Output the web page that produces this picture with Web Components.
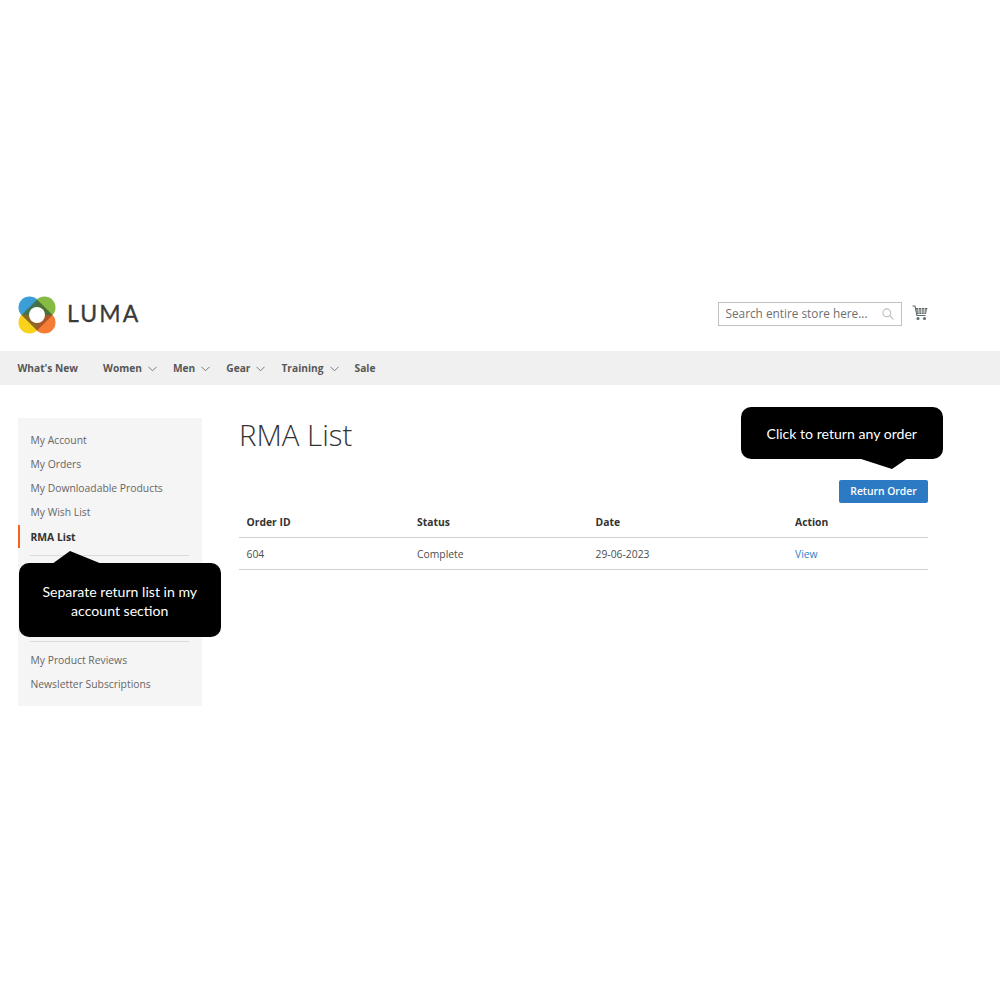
<!DOCTYPE html>
<html>
<head>
<meta charset="utf-8">
<title>RMA List</title>
<style>
  html, body { margin: 0; padding: 0; background: #fff; }
  body { font-family: "Open Sans", sans-serif; color: #333; }
</style>
</head>
<body>
<luma-page>
  <luma-header slot="header"></luma-header>
  <luma-nav slot="nav"></luma-nav>
  <account-sidebar slot="side"></account-sidebar>
  <rma-list slot="main"></rma-list>
  <call-out style="left:18.5px;top:563px;width:202.5px;height:74px">Separate return list in my<br>account section
    <svg slot="tail" style="left:33px;top:-12px" width="50" height="13" viewBox="0 0 50 13"><path d="M0 13 L18 0 L50 13 Z" fill="#000"/></svg>
  </call-out>
  <call-out style="left:740.5px;top:406.5px;width:202.5px;height:52px">Click to return any order
    <svg slot="tail" style="left:117px;top:51px" width="50" height="12" viewBox="0 0 50 12"><path d="M0 0 H50 L34 11 Z" fill="#000"/></svg>
  </call-out>
</luma-page>

<script>
class LumaPage extends HTMLElement {
  constructor() {
    super();
    this.shadowDOM = this.attachShadow({ mode: 'open' });
  }
  connectedCallback() {
    this.shadowDOM.innerHTML = `
      <style>
        :host { display: block; width: 1000px; height: 1000px; padding-top: 296px; box-sizing: border-box; position: relative; }
        .columns { display: flex; padding: 33px 72px 0 18px; gap: 37px; align-items: flex-start; }
        ::slotted([slot=main]) { flex: 1; min-width: 0; }
      </style>
      <slot name="header"></slot>
      <slot name="nav"></slot>
      <div class="columns">
        <slot name="side"></slot>
        <slot name="main"></slot>
      </div>
      <slot></slot>`;
  }
}

class LumaHeader extends HTMLElement {
  constructor() {
    super();
    this.shadowDOM = this.attachShadow({ mode: 'open' });
  }
  connectedCallback() {
    this.shadowDOM.innerHTML = `
      <style>
        :host { display: flex; height: 55px; padding: 0 72px 0 18px; align-items: flex-start; justify-content: space-between; box-sizing: border-box; }
        .logo { display: flex; align-items: center; gap: 11px; height: 37px; }
        .word { font: 400 23px/32px "Lato", sans-serif; letter-spacing: 2.1px; color: #3a3a3a; -webkit-text-stroke: .3px #3a3a3a; margin-top: -4px; }
        .tools { display: flex; align-items: flex-start; gap: 10px; padding-top: 6px; }
        .search { width: 184px; height: 24px; border: 1px solid #c2c2c2; box-sizing: border-box; display: flex; align-items: center; justify-content: space-between; padding: 0 7px 2px 6.5px; font-size: 11.8px; color: #6f6f6f; }
        .search svg { margin-top: 2px; }
        .cart { display: block; margin-top: 3px; }
      </style>
      <div class="logo">
        <svg width="38" height="38" viewBox="0 0 38 38">
          <circle cx="11.5" cy="11.5" r="11" fill="#3b9ed9"/>
          <circle cx="26.5" cy="11.5" r="11" fill="#85bb45"/>
          <circle cx="11.5" cy="26.5" r="11" fill="#f9d21c"/>
          <circle cx="26.5" cy="26.5" r="11" fill="#f47c34"/>
          <path d="M19 19 L3.5 19 L19 3.5 Z" fill="#3f7550"/>
          <path d="M19 19 L19 3.5 L34.5 19 Z" fill="#4c6f35"/>
          <path d="M19 19 L34.5 19 L19 34.5 Z" fill="#a8562a"/>
          <path d="M19 19 L19 34.5 L3.5 19 Z" fill="#8c6a24"/>
          <circle cx="19" cy="19" r="8" fill="#fff"/>
        </svg>
        <span class="word">LUMA</span>
      </div>
      <div class="tools">
        <div class="search">
          <span>Search entire store here...</span>
          <svg width="12" height="12" viewBox="0 0 12 12" fill="none" stroke="#bdbdbd" stroke-width="1.1"><circle cx="4.8" cy="4.8" r="3.9"/><path d="M7.7 7.7 L11.4 11.4"/></svg>
        </div>
        <svg class="cart" width="16" height="16" viewBox="0 0 16 16">
          <path d="M0.5 1 H3 L5 10.5 H13.5" fill="none" stroke="#5e6a6a" stroke-width="1.2"/>
          <path d="M3.4 3 H15.5 L14 9 H4.6 Z" fill="#5e6a6a"/>
          <path d="M4 5 H15 M4.5 7 H14.5 M6.5 3 L7 9 M9.5 3 V9 M12.5 3 L12 9" stroke="#fff" stroke-width=".6" fill="none"/>
          <circle cx="6" cy="13.5" r="1.5" fill="#5e6a6a"/>
          <circle cx="12.5" cy="13.5" r="1.5" fill="#5e6a6a"/>
        </svg>
      </div>`;
  }
}

class LumaNav extends HTMLElement {
  constructor() {
    super();
    this.shadowDOM = this.attachShadow({ mode: 'open' });
  }
  connectedCallback() {
    const items = [['What\'s New', false, 25], ['Women', true, 16], ['Men', true, 16], ['Gear', true, 16], ['Training', true, 16], ['Sale', false, 0]];
    const chev = '<svg width="9" height="6" viewBox="0 0 9 6" fill="none" stroke="#7a7a7a" stroke-width="1"><path d="M.5 .8 L4.5 4.8 L8.5 .8"/></svg>';
    this.shadowDOM.innerHTML = `
      <style>
        :host { display: flex; height: 34px; background: #f0f0f0; padding-left: 17.5px; align-items: center; box-sizing: border-box; font-size: 10.2px; font-weight: 700; color: #575757; line-height: 32px; }
        span { display: flex; align-items: center; gap: 6px; }
        svg { margin-top: 2px; }
      </style>
      ${items.map(([t, c, m]) => `<span style="margin-right:${m}px">${t}${c ? chev : ''}</span>`).join('')}`;
  }
}

class CallOut extends HTMLElement {
  constructor() {
    super();
    this.shadowDOM = this.attachShadow({ mode: 'open' });
  }
  connectedCallback() {
    this.shadowDOM.innerHTML = `
      <style>
        :host { display: block; position: absolute; background: #000; color: #fff; border-radius: 10px; text-align: center; font: 400 14.1px/19px "Lato", sans-serif; box-sizing: border-box; padding-top: 2px; }
        .txt { display: flex; height: 100%; align-items: center; justify-content: center; }
        ::slotted(svg) { position: absolute; }
      </style>
      <div class="txt"><div><slot></slot></div></div>
      <slot name="tail"></slot>`;
  }
}

class AccountSidebar extends HTMLElement {
  constructor() {
    super();
    this.shadowDOM = this.attachShadow({ mode: 'open' });
  }
  connectedCallback() {
    const group = (list) => list.map((t) => `<a class="${t === 'RMA List' ? 'on' : ''}">${t}</a>`).join('');
    this.shadowDOM.innerHTML = `
      <style>
        :host { display: block; width: 184px; height: 288px; flex: none; background: #f5f5f5; padding: 10px 0; box-sizing: border-box; font-size: 10.35px; color: #666; }
        a { display: flex; align-items: center; height: 24px; padding: 0 0 1px 12.5px; box-sizing: border-box; }
        a.on { color: #333; font-weight: 700; border-left: 2px solid #f26322; padding-left: 10.5px; padding-bottom: 0; height: 23px; margin-top: 1px; }
        hr { border: 0; border-top: 1px solid #dcdcdc; margin: 7px 13px 6px 12px; height: 0; }
        .covered { height: 72px; }
      </style>
      ${group(['My Account', 'My Orders', 'My Downloadable Products', 'My Wish List', 'RMA List'])}
      <hr>
      <div class="covered"></div>
      <hr>
      ${group(['My Product Reviews', 'Newsletter Subscriptions'])}`;
  }
}

class RmaList extends HTMLElement {
  constructor() {
    super();
    this.shadowDOM = this.attachShadow({ mode: 'open' });
  }
  connectedCallback() {
    this.shadowDOM.innerHTML = `
      <style>
        :host { display: block; font-size: 10.35px; color: #4d4d4d; }
        h1 { margin: 0; font: 300 29.4px/35px "Open Sans", sans-serif; color: #333; height: 62px; }
        .bar { display: flex; justify-content: flex-end; height: 23px; }
        button { all: unset; background: #2c79c4; color: #fff; font-weight: 600; font-size: 10.35px; width: 89px; height: 23px; border-radius: 2px; text-align: center; line-height: 23px; }
        .grid { display: grid; grid-template-columns: 170.5px 178.5px 199.5px 1fr; padding-left: 7.5px; align-items: center; }
        .head { height: 35px; font-weight: 700; color: #333; border-bottom: 1px solid #d1d1d1; box-sizing: border-box; padding-top: 4px; }
        .row { height: 32px; border-bottom: 1px solid #d1d1d1; box-sizing: border-box; }
        .link { color: #2f7fc8; }
      </style>
      <h1>RMA List</h1>
      <div class="bar"><button>Return Order</button></div>
      <div class="grid head"><span>Order ID</span><span>Status</span><span>Date</span><span>Action</span></div>
      <div class="grid row"><span>604</span><span>Complete</span><span>29-06-2023</span><span class="link">View</span></div>`;
  }
}

customElements.define('luma-page', LumaPage);
customElements.define('luma-header', LumaHeader);
customElements.define('luma-nav', LumaNav);
customElements.define('call-out', CallOut);
customElements.define('account-sidebar', AccountSidebar);
customElements.define('rma-list', RmaList);
</script>
</body>
</html>
